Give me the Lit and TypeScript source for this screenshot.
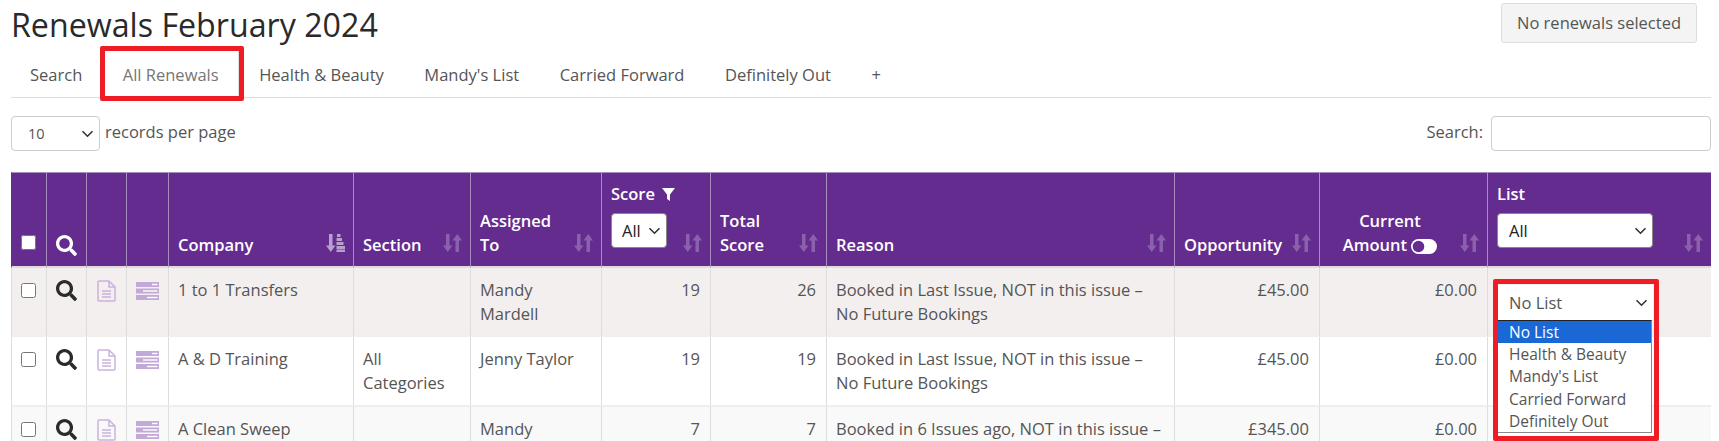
import { LitElement, html, css } from "lit";
import { customElement } from "lit/decorators.js";

const searchIcon = (c: string) => html`<svg class="mag" viewBox="0 0 512 512"><path fill=${c} d="M505 442.700L405.300 343c-4.500-4.500-10.600-7-17-7H372c27.600-35.300 44-79.700 44-128C416 93.100 322.900 0 208 0S0 93.100 0 208s93.100 208 208 208c48.300 0 92.700-16.400 128-44v16.300c0 6.400 2.500 12.500 7 17l99.700 99.700c9.400 9.400 24.600 9.400 33.900 0l28.300-28.300c9.400-9.400 9.400-24.600.1-34zM208 336c-70.700 0-128-57.200-128-128 0-70.700 57.200-128 128-128 70.700 0 128 57.200 128 128 0 70.700-57.200 128-128 128z"/></svg>`;

const docIcon = html`<svg class="doc" viewBox="0 0 19 22"><path fill="none" stroke="#c9b3dc" stroke-width="1.500" stroke-linejoin="round" d="M1 2a1 1 0 0 1 1-1h10l6 6v13a1 1 0 0 1-1 1H2a1 1 0 0 1-1-1z"/><path fill="none" stroke="#c9b3dc" stroke-width="1.500" d="M12 1v6h6M5 11h9M5 14h9M5 17h9"/></svg>`;

const serverIcon = html`<svg class="srv" viewBox="0 0 23 18"><g fill="#c2a9d8"><rect y="0" width="23" height="5"/><rect y="6.500" width="23" height="5"/><rect y="13" width="23" height="5"/></g><g fill="#fff"><rect x="16" y="1.800" width="5.500" height="1.400"/><rect x="7" y="8.300" width="14.500" height="1.400"/><rect x="11" y="14.800" width="10.500" height="1.400"/></g></svg>`;

const sortIcon = html`<svg class="sort" viewBox="0 0 19 18"><g fill="#fff" fill-opacity=".25"><path d="M3 0h3.500v11.500H9.500L4.750 18 0 11.500h3z"/><path d="M12.500 18H16V6.500h3L14.250 0 9.500 6.500h3z"/></g></svg>`;

const sortActive = html`<svg class="sort" viewBox="0 0 19 18"><g fill="#fff" fill-opacity=".55"><path d="M3 0h3.500v11.500H9.500L4.750 18 0 11.500h3z"/></g><g fill="#fff" fill-opacity=".55"><rect x="11" y="0" width="3.500" height="3"/><rect x="10.500" y="4" width="5.500" height="3"/><rect x="10.500" y="8" width="7" height="3"/><rect x="10.500" y="12" width="8.500" height="3"/><rect x="10.500" y="15.500" width="8.500" height="2.500"/></g></svg>`;

const funnel = html`<svg class="funnel" viewBox="0 0 13 13"><path fill="#fff" d="M0 0h13L8 6.500V13L5 11V6.500z"/></svg>`;

const toggle = html`<svg class="toggle" viewBox="0 0 26 15"><rect width="26" height="15" rx="7.500" fill="#fff"/><circle cx="7.500" cy="7.500" r="5.800" fill="#652c90"/></svg>`;

const opts = ["No List", "Health & Beauty", "Mandy's List", "Carried Forward", "Definitely Out"];

const rows = [
  { co: "1 to 1 Transfers", sec: "", who: "Mandy Mardell", score: 19, total: 26, reason: "Booked in Last Issue, NOT in this issue – No Future Bookings", opp: "£45.00", amt: "£0.00", cls: "r1", open: true },
  { co: "A & D Training", sec: "All Categories", who: "Jenny Taylor", score: 19, total: 19, reason: "Booked in Last Issue, NOT in this issue – No Future Bookings", opp: "£45.00", amt: "£0.00", cls: "r2", open: false },
  { co: "A Clean Sweep", sec: "", who: "Mandy Mardell", score: 7, total: 7, reason: "Booked in 6 Issues ago, NOT in this issue – No Future Bookings", opp: "£345.00", amt: "£0.00", cls: "r3", open: false },
];

@customElement("app-root")
export class AppRoot extends LitElement {
  static styles = css`
    :host {
      display: block;
      position: relative;
      height: 441px;
      overflow: hidden;
      background: #fff;
      font-family: "Open Sans", sans-serif;
      font-size: 16.5px;
      line-height: 24px;
      color: #555;
      padding: 0 8px 0 11px;
      box-sizing: border-box;
    }
    .top {
      display: flex;
      justify-content: space-between;
      height: 46px;
    }
    h1 {
      margin: 0;
      padding-top: 3px;
      font-size: 32.200px;
      line-height: 44px;
      font-weight: 400;
      color: #2a2a2a;
    }
    .btn {
      box-sizing: border-box;
      margin: 3px 14px 0 0;
      height: 40px;
      width: 196px;
      display: flex;
      align-items: center;
      justify-content: center;
      background: #f4f4f4;
      border: 1px solid #ddd;
      border-radius: 3px;
    }
    .tabs {
      display: flex;
      height: 52px;
      box-sizing: border-box;
      border-bottom: 1px solid #ddd;
    }
    .tab {
      padding: 16px 19.250px 0;
      border: 1px solid transparent;
      border-bottom: 0;
      color: #555;
    }
    .tab:first-child {
      padding-left: 18px;
    }
    .tab.active {
      color: #777;
      border-color: #ddd;
    }
    .tools {
      display: flex;
      justify-content: space-between;
      align-items: flex-start;
      margin-top: 18px;
      height: 56px;
    }
    .tools .side {
      display: flex;
      align-items: flex-start;
      gap: 5px;
    }
    .tools span {
      line-height: 32px;
    }
    select {
      appearance: none;
      font-family: "Open Sans", sans-serif;
      color: #555;
      border: 1px solid #ccc;
      border-radius: 4px;
      box-sizing: border-box;
      background: #fff
        url("data:image/svg+xml,%3Csvg xmlns='http://www.w3.org/2000/svg' viewBox='0 0 12 8'%3E%3Cpath fill='none' stroke='%23333' stroke-width='1.600' d='M1 1.200l5 5 5-5'/%3E%3C/svg%3E")
        no-repeat right 5px center / 13px 8px;
    }
    .len {
      width: 89px;
      height: 35px;
      font-size: 14.500px;
      padding-left: 16px;
    }
    .find {
      box-sizing: border-box;
      width: 220px;
      height: 35px;
      margin-left: 3px;
      border: 1px solid #ccc;
      border-radius: 4px;
    }
    table {
      width: 1700px;
      table-layout: fixed;
      border-collapse: separate;
      border-spacing: 0;
    }
    th {
      position: relative;
      box-sizing: border-box;
      height: 96px;
      background: #652c90;
      color: #fff;
      font-weight: 600;
      text-align: left;
      vertical-align: bottom;
      padding: 0 30px 9px 9px;
      border-top: 1px solid #a98fc0;
      border-left: 1px solid #a98fc0;
      border-bottom: 2px solid #ddd;
    }
    th:first-child {
      border-left-color: #652c90;
    }
    th.ic {
      padding: 0 0 10px 9px;
    }
    th.ctr {
      text-align: center;
      padding-right: 36px;
    }
    th.stack {
      vertical-align: top;
      padding-top: 9px;
    }
    th select {
      display: block;
      height: 35px;
      margin-top: 7px;
      font-size: 16.500px;
      color: #222;
      border-color: #888;
    }
    .sel-score {
      width: 56px;
      margin-right: -20px;
      padding-left: 10px;
    }
    .sel-list {
      width: 156px;
      padding-left: 11px;
    }
    .sort {
      position: absolute;
      right: 8px;
      bottom: 14px;
      width: 19px;
      height: 18px;
    }
    .funnel {
      width: 13px;
      height: 13px;
      margin-left: 3px;
      vertical-align: -1px;
    }
    .toggle {
      width: 26px;
      height: 15px;
      vertical-align: -3px;
    }
    .mag {
      width: 21px;
      height: 21px;
      display: block;
    }
    .doc {
      width: 19px;
      height: 22px;
      display: block;
      margin-left: 1px;
    }
    .srv {
      width: 23px;
      height: 18px;
      display: block;
      margin-top: 2px;
    }
    input[type="checkbox"] {
      display: block;
      margin: 0;
      width: 15px;
      height: 15px;
    }
    th input[type="checkbox"] {
      margin-bottom: 6px;
    }
    td {
      box-sizing: border-box;
      height: 70px;
      vertical-align: top;
      padding: 10px 10px 10px 9px;
      border-left: 1px solid #ddd;
      border-bottom: 2px solid #eee;
    }
    tr.r1 td {
      height: 69px;
      padding-bottom: 9px;
    }
    td.cb {
      padding-top: 15px;
    }
    td.g {
      padding-top: 12px;
    }
    td.num {
      text-align: right;
    }
    td.why {
      padding-right: 8px;
    }
    td.lc {
      position: relative;
      padding-top: 17px;
    }
    tr.r1 td {
      background: #f4efef;
    }
    tr.r2 td {
      background: #fff;
    }
    tr.r3 td {
      background: #f9f9f9;
    }
    .rowsel {
      display: block;
      width: 156px;
      height: 35px;
      font-size: 16.500px;
      color: #555;
      border: 0;
      border-radius: 0;
      padding-left: 12px;
    }
    .drop {
      position: absolute;
      left: 9px;
      top: 52px;
      width: 155px;
      box-sizing: border-box;
      background: #fff;
      border: 1px solid #8a8a8a;
      border-top: 1px solid #222;
      z-index: 2;
      font-size: 15.500px;
      line-height: 22.200px;
    }
    .drop div {
      padding-left: 11px;
      color: #555;
    }
    .drop div.on {
      background: #1a68d6;
      color: #fff;
    }
    .red {
      position: absolute;
      box-sizing: border-box;
      border: 5px solid #ee1c25;
      border-radius: 2px;
      z-index: 3;
      pointer-events: none;
    }
    .red.a {
      left: 100px;
      top: 46px;
      width: 144px;
      height: 55px;
    }
    .red.b {
      left: 1493px;
      top: 279px;
      width: 166px;
      height: 162px;
    }
  `;

  private cols = [35, 40, 40, 42, 185, 117, 131, 109, 116, 348, 145, 168, 224];

  render() {
    return html`
      <div class="top">
        <h1>Renewals February 2024</h1>
        <div class="btn">No renewals selected</div>
      </div>
      <div class="tabs">
        ${["Search", "All Renewals", "Health & Beauty", "Mandy's List", "Carried Forward", "Definitely Out", "+"].map(
          (t, i) => html`<div class="tab ${i === 1 ? "active" : ""}">${t}</div>`
        )}
      </div>
      <div class="tools">
        <div class="side">
          <select class="len"><option>10</option></select>
          <span>records per page</span>
        </div>
        <div class="side">
          <span>Search:</span>
          <input class="find" type="text" />
        </div>
      </div>
      <table>
        <colgroup>${this.cols.map((w) => html`<col style="width:${w}px" />`)}</colgroup>
        <thead>
          <tr>
            <th class="ic"><input type="checkbox" /></th>
            <th class="ic">${searchIcon("#fff")}</th>
            <th class="ic"></th>
            <th class="ic"></th>
            <th>Company${sortActive}</th>
            <th>Section${sortIcon}</th>
            <th>Assigned To${sortIcon}</th>
            <th class="stack">Score ${funnel}<select class="sel-score"><option>All</option></select>${sortIcon}</th>
            <th>Total Score${sortIcon}</th>
            <th>Reason${sortIcon}</th>
            <th>Opportunity${sortIcon}</th>
            <th class="ctr">Current<br />Amount ${toggle}${sortIcon}</th>
            <th class="stack">List<select class="sel-list"><option>All</option></select>${sortIcon}</th>
          </tr>
        </thead>
        <tbody>
          ${rows.map(
            (r) => html`<tr class=${r.cls}>
              <td class="cb"><input type="checkbox" /></td>
              <td class="g">${searchIcon("#2b2b2b")}</td>
              <td class="g">${docIcon}</td>
              <td class="g">${serverIcon}</td>
              <td>${r.co}</td>
              <td>${r.sec}</td>
              <td>${r.who}</td>
              <td class="num">${r.score}</td>
              <td class="num">${r.total}</td>
              <td class="why">${r.reason}</td>
              <td class="num">${r.opp}</td>
              <td class="num">${r.amt}</td>
              <td class="lc">
                <select class="rowsel"><option>No List</option></select>
                ${r.open
                  ? html`<div class="drop">${opts.map((o, i) => html`<div class=${i === 0 ? "on" : ""}>${o}</div>`)}</div>`
                  : ""}
              </td>
            </tr>`
          )}
        </tbody>
      </table>
      <div class="red a"></div>
      <div class="red b"></div>
    `;
  }
}
